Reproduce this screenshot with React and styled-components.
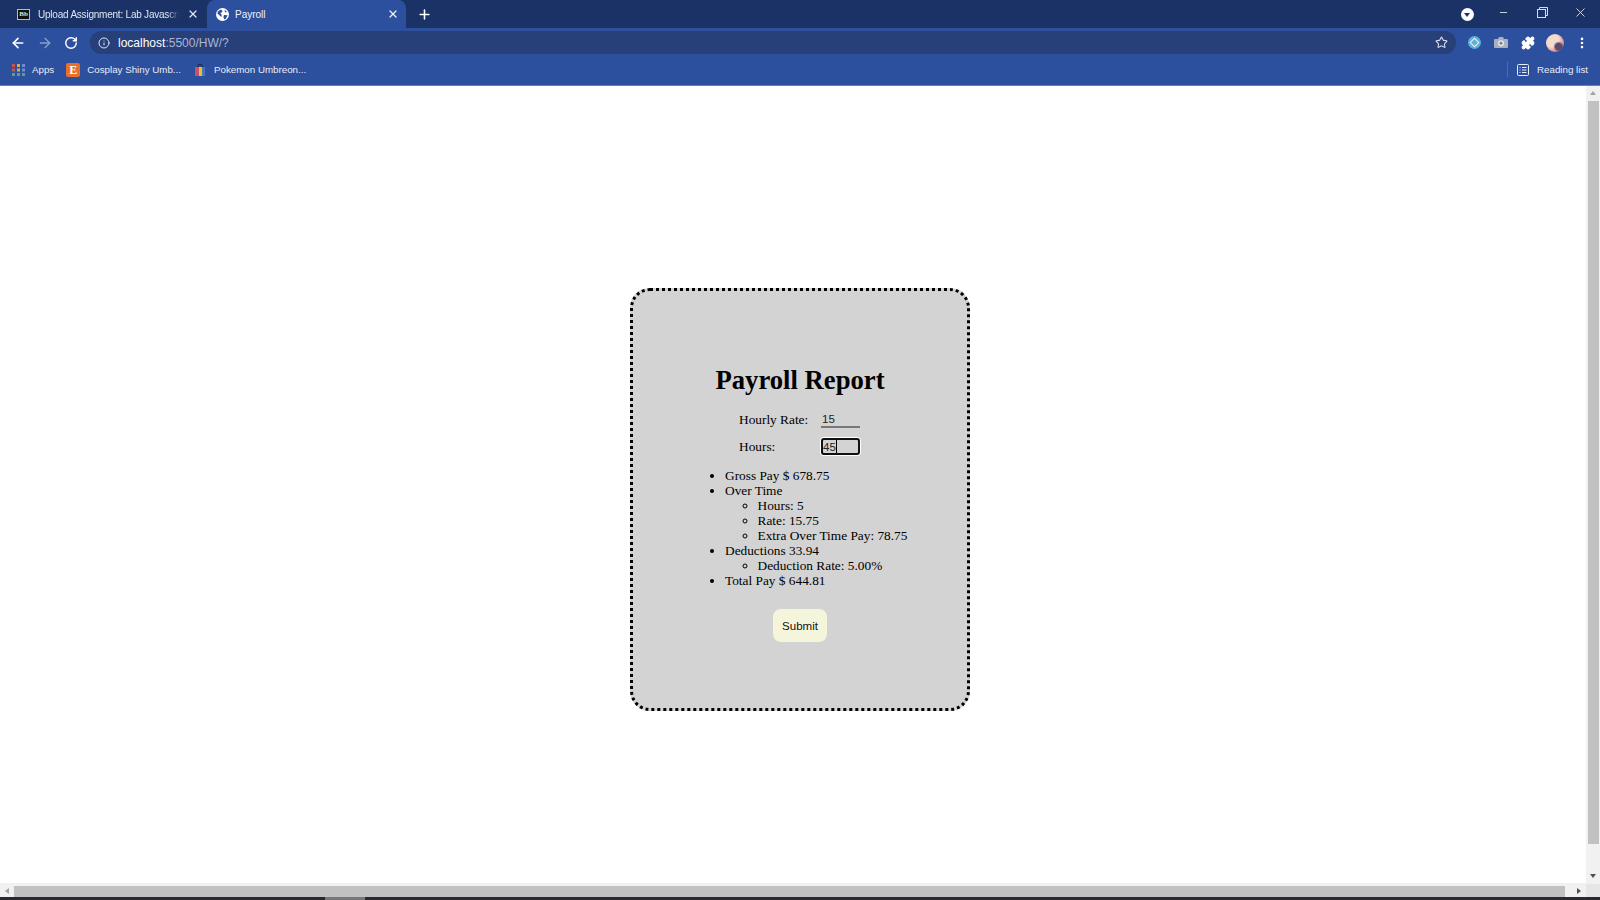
import React from "react";
import styled, { createGlobalStyle } from "styled-components";
import { ArrowLeft, ArrowRight, RotateCw, Info, Star, Plus, X, Minus, Puzzle, MoreVertical } from "lucide-react";

const Global = createGlobalStyle`
	html, body { margin: 0; padding: 0; height: 100%; overflow: hidden; background: #fff; }
	#root { height: 100%; }
`;

const Screen = styled.div`
	width: 1600px;
	height: 900px;
	display: flex;
	flex-direction: column;
	font-family: "Liberation Sans", Arial, sans-serif;
	background: #fff;
`;

const TabStrip = styled.div`
	height: 28px;
	background: #1b3266;
	display: flex;
	align-items: flex-end;
	padding-left: 8px;
	color: #fff;
`;

const Tab = styled.div`
	width: 199px;
	height: 28px;
	box-sizing: border-box;
	display: flex;
	align-items: center;
	gap: ${p => p.$active ? "6px" : "8px"};
	padding: 0 ${p => p.$active ? "7px" : "8px"} 0 9px;
	font-size: 10px;
	border-radius: 8px 8px 0 0;
	background: ${p => p.$active ? "#2c4f9e" : "transparent"};
	color: ${p => p.$active ? "#f0f3fa" : "#dfe5f2"};
`;

const TabTitle = styled.span`
	flex: 1;
	white-space: nowrap;
	overflow: hidden;
	${p => p.$fade && "letter-spacing: -0.22px; mask-image: linear-gradient(90deg, #000 92%, transparent);"}
`;

const BbIcon = styled.span`
	width: 13px;
	height: 11px;
	flex: none;
	background: #111;
	border: 1px solid #c9bb8a;
	box-sizing: border-box;
	color: #e8e0c0;
	font: bold 7px/9px "Liberation Serif", serif;
	text-align: center;
`;

const NewTab = styled.div`
	width: 36px;
	height: 28px;
	display: flex;
	align-items: center;
	justify-content: center;
`;

const WindowControls = styled.div`
	margin-left: auto;
	height: 28px;
	display: flex;
	align-items: flex-start;
`;

const MediaDot = styled.span`
	width: 13px;
	height: 13px;
	margin: 8px 11px 0 0;
	border-radius: 50%;
	background: #fff;
	display: flex;
	align-items: center;
	justify-content: center;
	&::after {
		content: "";
		border-left: 3px solid transparent;
		border-right: 3px solid transparent;
		border-top: 4px solid #1b3266;
	}
`;

const WinButton = styled.span`
	width: 38.5px;
	height: 24px;
	display: flex;
	align-items: center;
	justify-content: center;
	color: #d5dcea;
`;

const Toolbar = styled.div`
	height: 29px;
	background: #2c4f9e;
	display: flex;
	align-items: center;
	padding: 0 4.5px 0 5px;
	color: #fff;
`;

const NavButton = styled.span`
	width: 26.5px;
	height: 24px;
	display: flex;
	align-items: center;
	justify-content: center;
	color: ${p => p.$off ? "#8a9fcc" : "#fff"};
`;

const Omnibox = styled.div`
	flex: 1;
	height: 23px;
	margin: 0 4.5px 0 5.5px;
	background: #27407a;
	border-radius: 12px;
	display: flex;
	align-items: center;
	padding: 0 8px;
	font-size: 12px;
	color: #a9b6d4;
`;

const Host = styled.span`
	color: #fff;
	margin-left: 8px;
`;

const StarWrap = styled.span`
	margin-left: auto;
	display: flex;
	color: #d8dfee;
`;

const ExtSlot = styled.span`
	width: 27px;
	height: 24px;
	display: flex;
	align-items: center;
	justify-content: center;
`;

const ExtBall = styled.span`
	width: 13px;
	height: 13px;
	border-radius: 50%;
	background: #5fb0d8;
	display: flex;
	align-items: center;
	justify-content: center;
	&::after {
		content: "";
		width: 5px;
		height: 5px;
		border: 1px solid #e8f4fa;
		transform: rotate(45deg);
	}
`;

const Avatar = styled.span`
	width: 18px;
	height: 18px;
	border-radius: 50%;
	background: radial-gradient(circle at 70% 70%, #5a4a70 0 18%, transparent 30%), radial-gradient(circle at 35% 35%, #f4dccc 0 40%, #d88a90 70%, #b06a80 100%);
`;

const Bookmarks = styled.div`
	height: 29px;
	box-sizing: border-box;
	padding: 0 12px 3px;
	background: #2c4f9e;
	border-bottom: 1px solid #5f82bf;
	display: flex;
	align-items: center;
	font-size: 9.75px;
	color: #e8ecf6;
`;

const Bookmark = styled.span`
	display: flex;
	align-items: center;
	gap: 7px;
	margin-right: 12px;
`;

const EtsyBadge = styled.span`
	width: 14px;
	height: 14px;
	background: #e8702a;
	border-radius: 2px;
	color: #fff;
	font: bold 12px/14px "Liberation Serif", serif;
	text-align: center;
`;

const ReadingList = styled.span`
	margin-left: auto;
	display: flex;
	align-items: center;
	gap: 8px;
	padding-left: 9px;
	border-left: 1px solid #4a6cb0;
	height: 15px;
`;

const Viewport = styled.div`
	flex: 1;
	display: flex;
	min-height: 0;
`;

const Page = styled.main`
	flex: 1;
	display: flex;
	align-items: flex-start;
	justify-content: center;
	padding-left: 14px;
	padding-top: 202px;
	font-family: "Liberation Serif", "Times New Roman", serif;
	font-size: 13.33px;
	color: #000;
`;

const VScroll = styled.div`
	width: 14px;
	background: #f1f1f1;
	display: flex;
	flex-direction: column;
	align-items: center;
`;

const ArrowBtn = styled.span`
	width: 14px;
	height: 14px;
	flex: none;
	display: flex;
	align-items: center;
	justify-content: center;
	&::after {
		content: "";
		${p => p.$dir === "up" && "border-left: 3.5px solid transparent; border-right: 3.5px solid transparent; border-bottom: 4px solid #a3a3a3;"}
		${p => p.$dir === "down" && "border-left: 3.5px solid transparent; border-right: 3.5px solid transparent; border-top: 4px solid #505050;"}
		${p => p.$dir === "left" && "border-top: 3.5px solid transparent; border-bottom: 3.5px solid transparent; border-right: 4px solid #a3a3a3;"}
		${p => p.$dir === "right" && "border-top: 3.5px solid transparent; border-bottom: 3.5px solid transparent; border-left: 4px solid #505050;"}
	}
`;

const VThumb = styled.div`
	flex: 1;
	width: 11px;
	margin: 1px 0 25px;
	background: #c1c1c1;
`;

const HScroll = styled.div`
	height: 14px;
	box-sizing: border-box;
	padding-top: 2px;
	background: #f1f1f1;
	display: flex;
	align-items: center;
`;

const HThumb = styled.div`
	flex: 1;
	height: 11px;
	margin-right: 7px;
	background: #c1c1c1;
`;

const Corner = styled.span`
	width: 14px;
	height: 14px;
	background: #e6e6e6;
`;

const Taskbar = styled.div`
	height: 3px;
	background: linear-gradient(90deg, #2a2a2e 325px, #77777a 325px 365px, #2a2a2e 365px);
`;

const Card = styled.form`
	width: 340px;
	height: 423px;
	box-sizing: border-box;
	background: #d3d3d3;
	border: 3px dotted #000;
	border-radius: 20px;
	display: flex;
	flex-direction: column;
	align-items: center;
	padding-top: 74px;
`;

const Title = styled.h1`
	margin: 0 0 13px;
	font-size: 26.67px;
	line-height: 31px;
	font-weight: bold;
`;

const FieldRow = styled.label`
	width: 122px;
	height: 21px;
	margin-bottom: 6px;
	display: flex;
	align-items: center;
`;

const FieldLabel = styled.span`
	width: 82px;
	flex: none;
`;

const TextInput = styled.input`
	width: 39px;
	height: 17px;
	box-sizing: border-box;
	padding: 0 1px;
	background: transparent;
	font: 11.5px "Liberation Sans", Arial, sans-serif;
	color: #222;
	outline: none;
	border: none;
	border-bottom: 2px solid #777;
	${p => p.$focused && `
		padding: 0;
		border: 2px solid #111;
		border-radius: 3px;
		box-shadow: 0 0 0 1px #fff;
	`}
`;

const Caret = styled.span`
	position: absolute;
	left: 15px;
	top: 2px;
	width: 1px;
	height: 13px;
	background: #000;
`;

const InputWrap = styled.span`
	position: relative;
	display: inline-flex;
`;

const Summary = styled.ul`
	list-style: disc;
	width: 208px;
	margin: 5px 0 0 67px;
	padding: 0 0 0 25px;
	box-sizing: border-box;
	line-height: 15px;
	align-self: flex-start;
`;

const SubList = styled.ul`
	list-style: circle;
	margin: 0;
	padding: 0 0 0 32.5px;
`;

const SubmitButton = styled.button`
	margin-top: 21px;
	width: 54px;
	height: 33px;
	background: #f5f5dc;
	border: none;
	border-radius: 8px;
	font: 11.5px "Liberation Sans", Arial, sans-serif;
	color: #111;
	padding: 0;
`;

const GlobeIcon = () => (
	<svg width="13" height="13" viewBox="0 0 13 13">
		<circle cx="6.5" cy="6.5" r="6.5" fill="#fff" />
		<path d="M2 3.2 5 1.6 6.6 3 5.6 4.6 4.2 5 5.6 6.6 5.4 9.2 4.2 8 1.4 5.6ZM8.4 1.6 11 4 9.2 4.6ZM8 7 11.6 7.2 10 10.6 8.2 11.6 7.4 9Z" fill="#2c4f9e" />
	</svg>
);

const AppsIcon = () => (
	<svg width="13" height="12" viewBox="0 0 13 12">
		{["#c2554f", "#d8a850", "#6a8fd0"].map((c, x) => [0, 1, 2].map(y => (
			<rect key={x + "-" + y} x={x * 5} y={y * 4.5} width="3" height="3" fill={y === 2 ? "#5fa07a" : c} />
		)))}
	</svg>
);

const BagIcon = () => (
	<svg width="14" height="14" viewBox="0 0 14 14" fill="none">
		<path d="M5 4V2.5C5 1 9 1 9 2.5V4" stroke="#222" />
		<rect x="2" y="4" width="4" height="9" fill="#c8506a" />
		<rect x="6" y="4" width="3" height="9" fill="#e8c030" />
		<rect x="9" y="4" width="3" height="9" fill="#4a70c0" />
	</svg>
);

const CameraIcon = () => (
	<svg width="14" height="13" viewBox="0 0 14 13">
		<path d="M1 3h3l1-2h4l1 2h3a1 1 0 0 1 1 1v7a1 1 0 0 1-1 1H1a1 1 0 0 1-1-1V4a1 1 0 0 1 1-1Z" fill="#a9b0bf" />
		<circle cx="7" cy="7.2" r="3" fill="#e8ecf2" />
		<circle cx="7" cy="7.2" r="1.6" fill="#7d8594" />
	</svg>
);

const RestoreIcon = () => (
	<svg width="11" height="11" viewBox="0 0 11 11" fill="none" stroke="currentColor">
		<rect x="0.5" y="2.5" width="8" height="8" />
		<path d="M2.5 2.5v-2h8v8h-2" />
	</svg>
);

const ListIcon = () => (
	<svg width="12" height="12" viewBox="0 0 12 12" fill="none" stroke="#e8ecf6">
		<rect x="0.5" y="0.5" width="11" height="11" rx="1" />
		<path d="M2.5 3.5h1M5 3.5h4.5M2.5 6h1M5 6h4.5M2.5 8.5h1M5 8.5h4.5" />
	</svg>
);

export default function App() {
	return (
		<Screen>
			<Global />
			<TabStrip>
				<Tab>
					<BbIcon>Bb</BbIcon>
					<TabTitle $fade>Upload Assignment: Lab Javascript</TabTitle>
					<X size={12} strokeWidth={2.5} />
				</Tab>
				<Tab $active>
					<GlobeIcon />
					<TabTitle>Payroll</TabTitle>
					<X size={12} strokeWidth={2.5} />
				</Tab>
				<NewTab><Plus size={15} strokeWidth={2.5} /></NewTab>
				<WindowControls>
					<MediaDot />
					<WinButton><Minus size={11} /></WinButton>
					<WinButton><RestoreIcon /></WinButton>
					<WinButton><X size={15} strokeWidth={1.5} /></WinButton>
				</WindowControls>
			</TabStrip>
			<Toolbar>
				<NavButton><ArrowLeft size={16} strokeWidth={2.5} /></NavButton>
				<NavButton $off><ArrowRight size={16} strokeWidth={2} /></NavButton>
				<NavButton><RotateCw size={14} strokeWidth={2.5} /></NavButton>
				<Omnibox>
					<Info size={12} color="#e0e6f2" />
					<Host>localhost</Host>:5500/HW/?
					<StarWrap><Star size={13} /></StarWrap>
				</Omnibox>
				<ExtSlot><ExtBall /></ExtSlot>
				<ExtSlot><CameraIcon /></ExtSlot>
				<ExtSlot><Puzzle size={14} fill="#fff" /></ExtSlot>
				<ExtSlot><Avatar /></ExtSlot>
				<ExtSlot><MoreVertical size={14} strokeWidth={2.5} /></ExtSlot>
			</Toolbar>
			<Bookmarks>
				<Bookmark><AppsIcon />Apps</Bookmark>
				<Bookmark><EtsyBadge>E</EtsyBadge>Cosplay Shiny Umb...</Bookmark>
				<Bookmark><BagIcon />Pokemon Umbreon...</Bookmark>
				<ReadingList><ListIcon />Reading list</ReadingList>
			</Bookmarks>
			<Viewport>
				<Page>
					<Card onSubmit={e => e.preventDefault()}>
						<Title>Payroll Report</Title>
						<FieldRow>
							<FieldLabel>Hourly Rate:</FieldLabel>
							<TextInput defaultValue="15" />
						</FieldRow>
						<FieldRow>
							<FieldLabel>Hours:</FieldLabel>
							<InputWrap>
								<TextInput $focused defaultValue="45" />
								<Caret />
							</InputWrap>
						</FieldRow>
						<Summary>
							<li>Gross Pay $ 678.75</li>
							<li>Over Time
								<SubList>
									<li>Hours: 5</li>
									<li>Rate: 15.75</li>
									<li>Extra Over Time Pay: 78.75</li>
								</SubList>
							</li>
							<li>Deductions 33.94
								<SubList>
									<li>Deduction Rate: 5.00%</li>
								</SubList>
							</li>
							<li>Total Pay $ 644.81</li>
						</Summary>
						<SubmitButton>Submit</SubmitButton>
					</Card>
				</Page>
				<VScroll>
					<ArrowBtn $dir="up" />
					<VThumb />
					<ArrowBtn $dir="down" />
				</VScroll>
			</Viewport>
			<HScroll>
				<ArrowBtn $dir="left" />
				<HThumb />
				<ArrowBtn $dir="right" />
				<Corner />
			</HScroll>
			<Taskbar />
		</Screen>
	);
}
